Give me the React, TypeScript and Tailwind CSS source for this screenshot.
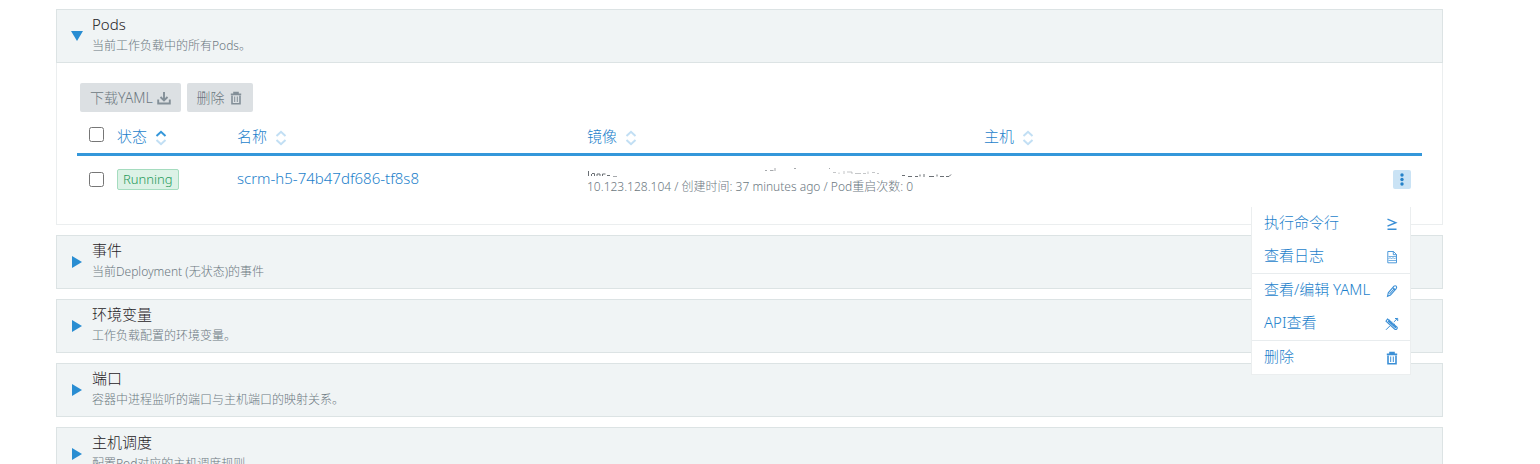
import React from "react";

const sections = [
  { title: "事件", desc: "当前Deployment (无状态)的事件" },
  { title: "环境变量", desc: "工作负载配置的环境变量。" },
  { title: "端口", desc: "容器中进程监听的端口与主机端口的映射关系。" },
  { title: "主机调度", desc: "配置Pod对应的主机调度规则" },
];

const columns = [
  { name: "状态", width: "w-[120px]", sorted: true },
  { name: "名称", width: "w-[350px]", sorted: false },
  { name: "镜像", width: "w-[397px]", sorted: false },
  { name: "主机", width: "", sorted: false },
];

const menuGroups = [
  [
    { name: "执行命令行", icon: "shell" },
    { name: "查看日志", icon: "file" },
  ],
  [
    { name: "查看/编辑 YAML", icon: "edit" },
    { name: "API查看", icon: "api" },
  ],
  [{ name: "删除", icon: "trash" }],
];

const Icon = ({ name, className }: { name: string; className?: string }) => (
  <svg
    viewBox="0 0 14 14"
    fill="none"
    stroke="currentColor"
    strokeWidth="1.3"
    className={`size-3.5 shrink-0 ${className ?? ""}`}>
    {name === "download" && (
      <path d="M7 1v8M3.5 6 7 9.5 10.5 6M1.2 8.5v4h11.6v-4" strokeWidth="1.9" />
    )}
    {name === "trash" && (
      <>
        <path d="M1.8 3.4h10.4M5 3V1.6h4V3" strokeWidth="1.6" />
        <path d="M3 4.5v8.2h8V4.5" strokeWidth="1.6" />
        <path d="M5.7 5.5v5.5M8.3 5.5v5.5" strokeWidth="1" />
      </>
    )}
    {name === "shell" && <path d="M2.5 2.2 10.8 5.7 2.5 9.2M2.5 12.3h9" strokeWidth="1.4" />}
    {name === "file" && (
      <>
        <path d="M2.8 1.5h5.7l3 3v8.3H2.8zM8.3 1.5v3.2h3.2" strokeWidth="0.9" />
        <path
          d="M3.5 6.5H11M3.5 10.5H11M3.5 9 5 7.5 6.5 9 8 7.5 9.5 9 11 7.5"
          strokeWidth="1"
          opacity="0.7"
        />
      </>
    )}
    {name === "edit" && (
      <path
        d="m2.5 12.3.8-3.5L9 2.2q1.2-1 2.2 0t0 2.4L5.5 11zM8 3.8l2 1.7M4.5 10l5-5.5"
        strokeWidth="1.1"
      />
    )}
    {name === "api" && (
      <>
        <path d="m1 12.8 4-4M8.8 5l3.6-3.5M10 1.5h2.7V4" strokeWidth="1" />
        <path
          d="M2.5 2 12 10.2q.8 1-.2 1.8t-2 .2L1 4.2zM3.5 4.5l1.6-1.5M5.7 6.5l1.7-1.6M8 8.5 9.7 7M10 10.500l1.500-1.300M3 4l8 7"
          strokeWidth="1.1"
        />
      </>
    )}
  </svg>
);

const SortIcon = ({ sorted }: { sorted: boolean }) => (
  <svg viewBox="0 0 12 16" fill="none" strokeWidth="2" className="mt-1 h-4 w-3">
    <path d="M1.5 6 6 1.8 10.5 6" stroke={sorted ? "#3497da" : "#c2dff4"} />
    <path d="M1.5 10 6 14.2 10.5 10" stroke="#c2dff4" />
  </svg>
);

const SectionHeader = ({ title, desc, open }: { title: string; desc: string; open?: boolean }) => (
  <button
    type="button"
    aria-expanded={!!open}
    className="flex h-[54px] w-full items-start border border-[#dce3e4] bg-[#f0f4f5] pl-3.5 text-left">
    <svg viewBox="0 0 12 12" className="mt-5 mr-[9px] size-3 shrink-0 fill-[#298dd2]">
      {open ? <path d="M0 1h12L6 11z" /> : <path d="M1 0v12l10-6z" />}
    </svg>
    <span className="block">
      <span className="block pt-1 text-[15px] leading-5 text-[#1f2225]">{title}</span>
      <span className="block pt-0.5 text-xs leading-5 text-[#6c7881]">{desc}</span>
    </span>
  </button>
);

const ActionMenu = () => (
  <div className="absolute top-[37px] right-0 z-10 w-40 border-x border-b border-[#ebeeef] bg-white">
    {menuGroups.map((group, index) => (
      <ul key={index} className={index > 0 ? "border-t border-[#e8ecee]" : ""}>
        {group.map((item) => (
          <li key={item.name}>
            <a
              href="#"
              className="flex h-[33px] items-center justify-between pr-[11px] pb-0.5 pl-3 text-[15px] whitespace-nowrap text-[#1d7fcb]">
              <span className="leading-5">{item.name}</span>
              <Icon name={item.icon} className="mt-1 text-[#3b8fd6]" />
            </a>
          </li>
        ))}
      </ul>
    ))}
  </div>
);

const ImageName = () => (
  <svg viewBox="0 0 370 12" className="h-3 w-[370px]" stroke="#6b7075" fill="none">
    <path d="M1.5 5v5M4.5 10V8M5 7.5h2.5V10M10 10V8h3v2M15.5 10V8h3M20 9.5h3" />
    <path d="M26 10.5h4M178 4.5h2M183 4.5h3.5M188 2v3M207 2.5h2M242 2.5h1" opacity="0.6" />
    <path
      d="M246 6.5h3M252 6.5V8M257 5v3M260 6h5v2M268 7.5h6M276 7.5h3M281 5.5V8M285 6.5h3M290 7.5h2"
      opacity="0.4"
    />
    <path d="M315 9.5h3M321 10.5h4M328 10.5h3M333 8.5v2M337 8v3M342 10.5h5M350 8.5v2M353 10.5h4M359 10.5h3l2-2" />
  </svg>
);

const PodsTable = () => (
  <table className="w-full table-fixed text-left">
    <thead>
      <tr className="h-[42px] border-b-[3px] border-[#3497da]">
        <th className="w-10 pt-1 pl-3">
          <input type="checkbox" aria-label="all" className="block size-[15px]" />
        </th>
        {columns.map((col) => (
          <th key={col.name} className={`px-0 pt-2 pb-0 font-light ${col.width}`}>
            <button type="button" className="flex items-center gap-2 text-[15px] leading-5 text-[#1d7fcb]">
              {col.name}
              <SortIcon sorted={col.sorted} />
            </button>
          </th>
        ))}
        <th className="w-10" />
      </tr>
    </thead>
    <tbody>
      <tr className="h-12 align-top">
        <td className="pt-4 pl-3">
          <input type="checkbox" aria-label="scrm-h5-74b47df686-tf8s8" className="block size-[15px]" />
        </td>
        <td className="pt-[13px]">
          <span className="block w-fit rounded-xs border border-[#a5dcbf] bg-[#dcf2e6] px-[5px] text-[13px] leading-[19px] text-[#279a5a]">
            Running
          </span>
        </td>
        <td className="pt-2.5">
          <a href="#" className="block text-[15px] leading-6 text-[#1d7fcb]">
            scrm-h5-74b47df686-tf8s8
          </a>
        </td>
        <td className="pt-2.5 text-xs whitespace-nowrap text-[#6c7881]">
          <ImageName />
          <span className="block pt-px leading-4">
            10.123.128.104 / 创建时间: 37 minutes ago / Pod重启次数: 0
          </span>
        </td>
        <td />
        <td className="pt-3.5 pr-[11px]">
          <div className="relative ml-auto w-[18px]">
            <button
              type="button"
              aria-label="menu"
              className="flex h-[19px] w-[18px] items-center justify-center rounded-xs bg-[#cae3f5] text-[#2582c9]">
              <svg viewBox="0 0 4 13" fill="currentColor" className="h-[13px] w-1">
                <circle cx="2" cy="2" r="1.7" />
                <circle cx="2" cy="6.5" r="1.7" />
                <circle cx="2" cy="11" r="1.7" />
              </svg>
            </button>
            <ActionMenu />
          </div>
        </td>
      </tr>
    </tbody>
  </table>
);

const App = () => {
  return (
    <main className="flex flex-col gap-2.5 bg-white pt-[9px] pr-[97px] pl-14 font-['Noto_Sans','Noto_Sans_CJK_SC',sans-serif] font-light">
      <section>
        <SectionHeader title="Pods" desc="当前工作负载中的所有Pods。" open />
        <div className="border-x border-b border-[#ebeeef] px-5 pt-5 pb-[22px]">
          <div className="flex gap-1.5 pl-[3px] text-sm text-[#6c7881]">
            <button type="button" className="flex h-[29px] items-center gap-1 rounded-xs bg-[#dce0e3] px-2.5">
              下载YAML <Icon name="download" className="text-[#838f98]" />
            </button>
            <button type="button" className="flex h-[29px] items-center gap-1 rounded-xs bg-[#dce0e3] px-2.5">
              删除 <Icon name="trash" className="text-[#838f98]" />
            </button>
          </div>
          <PodsTable />
        </div>
      </section>
      {sections.map((section) => (
        <section key={section.title}>
          <SectionHeader title={section.title} desc={section.desc} />
        </section>
      ))}
    </main>
  );
};

export default App;
